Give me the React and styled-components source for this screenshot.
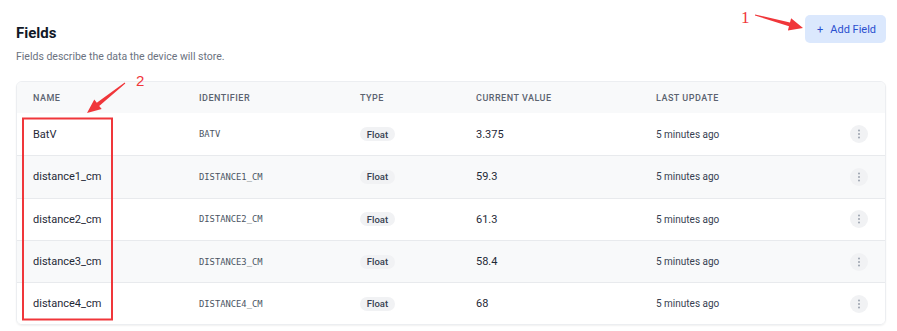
import React from "react";
import styled, { createGlobalStyle } from "styled-components";

const Global = createGlobalStyle`
  html, body { margin: 0; padding: 0; background: #ffffff; }
  body { font-family: Roboto, "Noto Sans", Arial, sans-serif; color: #1f2937; }
  * { box-sizing: border-box; }
`;

const Page = styled.div`
  position: relative;
  width: 897px;
  height: 331px;
  padding: 15px 11px 0 16px;
  overflow: hidden;
`;

const TopBar = styled.div`
  display: flex;
  justify-content: space-between;
  align-items: flex-start;
`;

const TitleBlock = styled.div`
  padding-top: 9px;
`;

const Title = styled.h2`
  margin: 0;
  font-size: 15px;
  line-height: 18px;
  font-weight: 700;
  color: #111827;
`;

const Subtitle = styled.p`
  margin: 8px 0 0;
  font-size: 10.5px;
  line-height: 13px;
  color: #6b7280;
`;

const AddButton = styled.button`
  display: flex;
  align-items: center;
  gap: 7px;
  height: 28px;
  width: 81px;
  padding: 0 0 0 12px;
  border: none;
  border-radius: 5px;
  background: #dbe8fd;
  color: #2a4fcf;
  font-family: inherit;
  font-size: 11px;
  font-weight: 400;
`;

const Card = styled.div`
  margin-top: 18px;
  border: 1px solid #eceef1;
  border-radius: 6px;
  overflow: hidden;
  box-shadow: 0 1px 2px rgba(0, 0, 0, 0.06);
`;

const Row = styled.div`
  display: grid;
  grid-template-columns: 166px 161px 116px 180px 1fr 18px;
  align-items: center;
  height: ${(p) => (p.$head ? "31px" : "42.3px")};
  padding: 0 17px 0 16px;
  background: ${(p) => (p.$alt ? "#f8f9fa" : "#ffffff")};
  border-top: ${(p) => (p.$first || p.$head ? "none" : "1px solid #e8eaed")};
`;

const HeadCell = styled.div`
  font-size: 9px;
  font-weight: 500;
  letter-spacing: 0.5px;
  color: #5b6370;
  text-transform: uppercase;
`;

const NameCell = styled.div`
  font-size: 11px;
  font-weight: 400;
  color: #1f2937;
`;

const IdCell = styled.div`
  font-family: "DejaVu Sans Mono", "Liberation Mono", monospace;
  font-size: 8.8px;
  color: #4b5563;
`;

const TypeCell = styled.div`
  display: flex;
  align-items: center;
`;

const Badge = styled.span`
  display: inline-flex;
  align-items: center;
  justify-content: center;
  width: 35px;
  height: 14px;
  border-radius: 7px;
  background: #f1f2f4;
  font-size: 9.5px;
  font-weight: 500;
  color: #374151;
`;

const ValueCell = styled.div`
  font-size: 11px;
  color: #1f2937;
`;

const TimeCell = styled.div`
  font-size: 10px;
  color: #374151;
`;

const Kebab = styled.button`
  width: 18px;
  height: 18px;
  border-radius: 50%;
  border: none;
  padding: 0;
  background: #f1f2f4;
  display: flex;
  align-items: center;
  justify-content: center;
`;

const Overlay = styled.svg`
  position: absolute;
  left: 0;
  top: 0;
  pointer-events: none;
`;

const fields = [
  { name: "BatV", id: "BATV", value: "3.375" },
  { name: "distance1_cm", id: "DISTANCE1_CM", value: "59.3" },
  { name: "distance2_cm", id: "DISTANCE2_CM", value: "61.3" },
  { name: "distance3_cm", id: "DISTANCE3_CM", value: "58.4" },
  { name: "distance4_cm", id: "DISTANCE4_CM", value: "68" },
];

const Dots = () => (
  <svg width="4" height="10" viewBox="0 0 4 10">
    <circle cx="2" cy="1.5" r="1" fill="#9ca3af" />
    <circle cx="2" cy="5" r="1" fill="#9ca3af" />
    <circle cx="2" cy="8.5" r="1" fill="#9ca3af" />
  </svg>
);

export default function App() {
  return (
    <>
      <Global />
      <Page>
        <TopBar>
          <TitleBlock>
            <Title>Fields</Title>
            <Subtitle>Fields describe the data the device will store.</Subtitle>
          </TitleBlock>
          <AddButton>
            <span>+</span>
            <span>Add Field</span>
          </AddButton>
        </TopBar>
        <Card>
          <Row $head $alt>
            <HeadCell>Name</HeadCell>
            <HeadCell>Identifier</HeadCell>
            <HeadCell>Type</HeadCell>
            <HeadCell>Current Value</HeadCell>
            <HeadCell>Last Update</HeadCell>
            <div />
          </Row>
          {fields.map((f, i) => (
            <Row key={f.id} $alt={i % 2 === 1} $first={i === 0}>
              <NameCell>{f.name}</NameCell>
              <IdCell>{f.id}</IdCell>
              <TypeCell>
                <Badge>Float</Badge>
              </TypeCell>
              <ValueCell>{f.value}</ValueCell>
              <TimeCell>5 minutes ago</TimeCell>
              <Kebab>
                <Dots />
              </Kebab>
            </Row>
          ))}
        </Card>
        <Overlay width="897" height="331" viewBox="0 0 897 331">
          <text x="741" y="23" fill="#f0363a" fontFamily="'Liberation Serif', serif" fontSize="17">1</text>
          <polygon
            fill="#f0363a"
            points="754.9,15.5 789,26.2 787.9,30.6 803,28 791.1,18.2 790,22.4 755.1,14.5"
          />
          <text x="136" y="86" fill="#f0363a" fontFamily="'Liberation Sans', Arial, sans-serif" fontSize="15">2</text>
          <polygon
            fill="#f0363a"
            points="124.7,82.6 96.8,102.7 94.3,99.6 87,113 101.7,109 99.2,105.9 125.3,83.4"
          />
          <rect x="23" y="118.5" width="89" height="201" fill="none" stroke="#f0363a" strokeWidth="2" />
        </Overlay>
      </Page>
    </>
  );
}
